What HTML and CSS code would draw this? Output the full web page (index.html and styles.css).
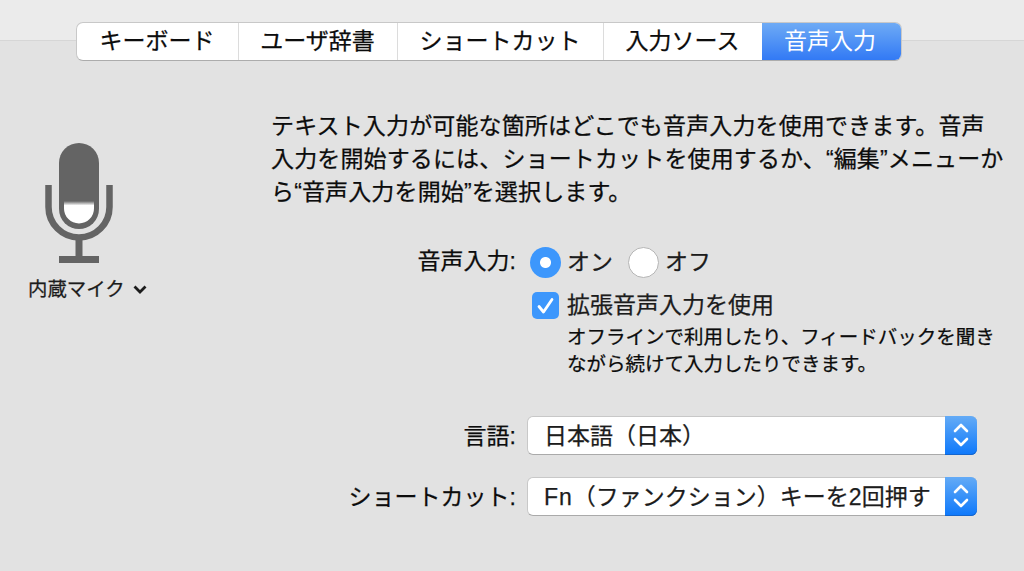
FILE: index.html
```
<!DOCTYPE html>
<html lang="ja">
<head>
    <meta charset="utf-8">
    <title>キーボード</title>
    <link rel="stylesheet" href="styles.css">
</head>
<body>
    <header>
        <nav class="tabs">
            <button class="tab keyboard">キーボード</button>
            <button class="tab dictionary">ユーザ辞書</button>
            <button class="tab shortcut">ショートカット</button>
            <button class="tab source">入力ソース</button>
            <button class="tab active">音声入力</button>
        </nav>
    </header>
    <main>
        <div class="mic">
            <svg width="68" height="122" viewBox="0 0 68 122">
                <defs>
                    <linearGradient id="level" x1="0" y1="0" x2="0" y2="1">
                        <stop offset="0" stop-color="#646464"/>
                        <stop offset="0.2" stop-color="#fff"/>
                    </linearGradient>
                </defs>
                <rect x="14" y="1" width="40" height="86" rx="20" fill="#646464"/>
                <path d="M19 59H49V66.500A15 15 0 0 1 19 66.500Z" fill="url(#level)"/>
                <path d="M3.500 43V65A30.500 30.500 0 0 0 64.500 65V43" fill="none" stroke="#646464" stroke-width="6.500"/>
                <path d="M30.500 97H37.500V114H54V121H14V114H30.500Z" fill="#646464"/>
            </svg>
            <div class="mic-label">
                内蔵マイク
                <svg width="14" height="9" viewBox="0 0 14 9"><path d="M1.500 1.500L7 7L12.500 1.500" fill="none" stroke="#1c1c1c" stroke-width="2.800"/></svg>
            </div>
        </div>
        <div class="content">
            <p class="intro">テキスト入力が可能な箇所はどこでも音声入力を使用できます。音声<br>入力を開始するには、ショートカットを使用するか、“編集”メニューか<br>ら“音声入力を開始”を選択します。</p>
            <div class="row dictation">
                <span class="label">音声入力:</span>
                <label class="option"><input type="radio" name="dictation" checked>オン</label>
                <label class="option"><input type="radio" name="dictation">オフ</label>
            </div>
            <div class="enhanced">
                <label class="check">
                    <input type="checkbox" checked>
                    <span class="box"><svg width="27" height="27" viewBox="0 0 27 27"><path d="M7 14.500L11.500 20L20 7.500" fill="none" stroke="#fff" stroke-width="2.800" stroke-linecap="round" stroke-linejoin="round"/></svg></span>
                    拡張音声入力を使用
                </label>
                <p class="note">オフラインで利用したり、フィードバックを聞き<br>ながら続けて入力したりできます。</p>
            </div>
            <div class="row language">
                <span class="label">言語:</span>
                <div class="select">
                    <span class="value">日本語（日本）</span>
                    <span class="arrows"><svg width="16" height="24" viewBox="0 0 16 24"><path d="M2 8L8 2L14 8M2 16L8 22L14 16" fill="none" stroke="#fff" stroke-width="2.600" stroke-linecap="round" stroke-linejoin="round"/></svg></span>
                </div>
            </div>
            <div class="row">
                <span class="label">ショートカット:</span>
                <div class="select">
                    <span class="value"><span class="key">Fn</span>（ファンクション）キーを2回押す</span>
                    <span class="arrows"><svg width="16" height="24" viewBox="0 0 16 24"><path d="M2 8L8 2L14 8M2 16L8 22L14 16" fill="none" stroke="#fff" stroke-width="2.600" stroke-linecap="round" stroke-linejoin="round"/></svg></span>
                </div>
            </div>
        </div>
    </main>
</body>
</html>
```
FILE: styles.css
```
* {
    box-sizing: border-box;
}

body {
    margin: 0;
    height: 571px;
    overflow: hidden;
    background: #e2e2e2;
    color: #0c0c0c;
    font-family: "Liberation Sans", "Noto Sans CJK JP", sans-serif;
    font-size: 23px;
    line-height: 33px;
    white-space: nowrap;
    -webkit-text-stroke: 0.25px;
}

p {
    margin: 0;
}

svg {
    display: block;
}

header {
    height: 41px;
    padding: 22px 0 0 76px;
    background: #ebebeb;
    border-bottom: 1px solid #d6d6d6;
}

.tabs {
    display: flex;
    width: 826px;
    height: 39px;
    border-radius: 7px;
    overflow: hidden;
    background: #fff;
    border: 1px solid #c8c8c8;
    border-bottom-color: #acacac;
    position: relative;
}

.tab {
    padding: 0 1px 0 0;
    border: 0;
    border-right: 1px solid #dcdcdc;
    background: none;
    color: #0c0c0c;
    font: inherit;
}

.keyboard {
    width: 162px;
}

.dictionary {
    width: 159px;
}

.shortcut {
    width: 206px;
}

.source {
    width: 158px;
    border-right: 0;
}

.tab.active {
    flex: 1;
    margin: -1px -1px -1px 0;
    padding-right: 4px;
    border: 0;
    color: #fff;
    -webkit-text-stroke: 0;
    background: linear-gradient(#70acf5, #3078f5);
    box-shadow: inset 0 -1px #2a66cf;
}

main {
    display: flex;
}

.mic {
    width: 271px;
    padding: 101px 0 0 28px;
}

.mic > svg {
    margin-left: 16.500px;
}

.mic-label {
    display: flex;
    align-items: center;
    gap: 8px;
    margin-top: 9px;
    font-size: 19.400px;
    color: #1c1c1c;
}

.content {
    padding-top: 69px;
}

.intro {
    letter-spacing: 0.14px;
}

.row {
    display: flex;
    align-items: center;
    height: 40px;
}

.label {
    width: 245px;
    margin-right: 11px;
    padding-top: 3px;
    text-align: right;
}

.dictation {
    margin-top: 33px;
}

.dictation .label {
    margin-right: 14px;
    padding: 0 0 2px;
}

.option {
    display: flex;
    align-items: center;
    margin-right: 15px;
    color: #1c1c1c;
}

.option input {
    appearance: none;
    width: 31px;
    height: 31px;
    margin: 0 6px 0 0;
    border: 1px solid #b5b5b5;
    border-radius: 50%;
    background: #fff;
}

.option input:checked {
    border: 0;
    background: radial-gradient(circle, #fff 5px, #3d97fc 6px);
}

.enhanced {
    padding: 6px 0 0 261px;
}

.check {
    display: flex;
    align-items: center;
    height: 35px;
    color: #1c1c1c;
}

.check input {
    display: none;
}

.box {
    margin-right: 8px;
    border-radius: 5px;
    background: #3d97fc;
}

.note {
    padding: 1px 0 0 35px;
    font-size: 19.500px;
    line-height: 27px;
}

.language {
    margin: 37px 0 21px;
}

.select {
    display: flex;
    width: 450px;
    height: 39px;
    border: 1px solid #c8c8c8;
    border-bottom-color: #aaa;
    border-radius: 6px;
    background: #fff;
    color: #1c1c1c;
}

.value {
    flex: 1;
    padding: 1px 0 0 16px;
    line-height: 37px;
}

.key {
    letter-spacing: 1px;
}

.arrows {
    display: flex;
    align-items: center;
    justify-content: center;
    width: 32px;
    margin: -1px;
    border-radius: 0 6px 6px 0;
    background: linear-gradient(#64abf6, #0d78fb);
    box-shadow: inset 0 -1px #1565cc;
}
```
